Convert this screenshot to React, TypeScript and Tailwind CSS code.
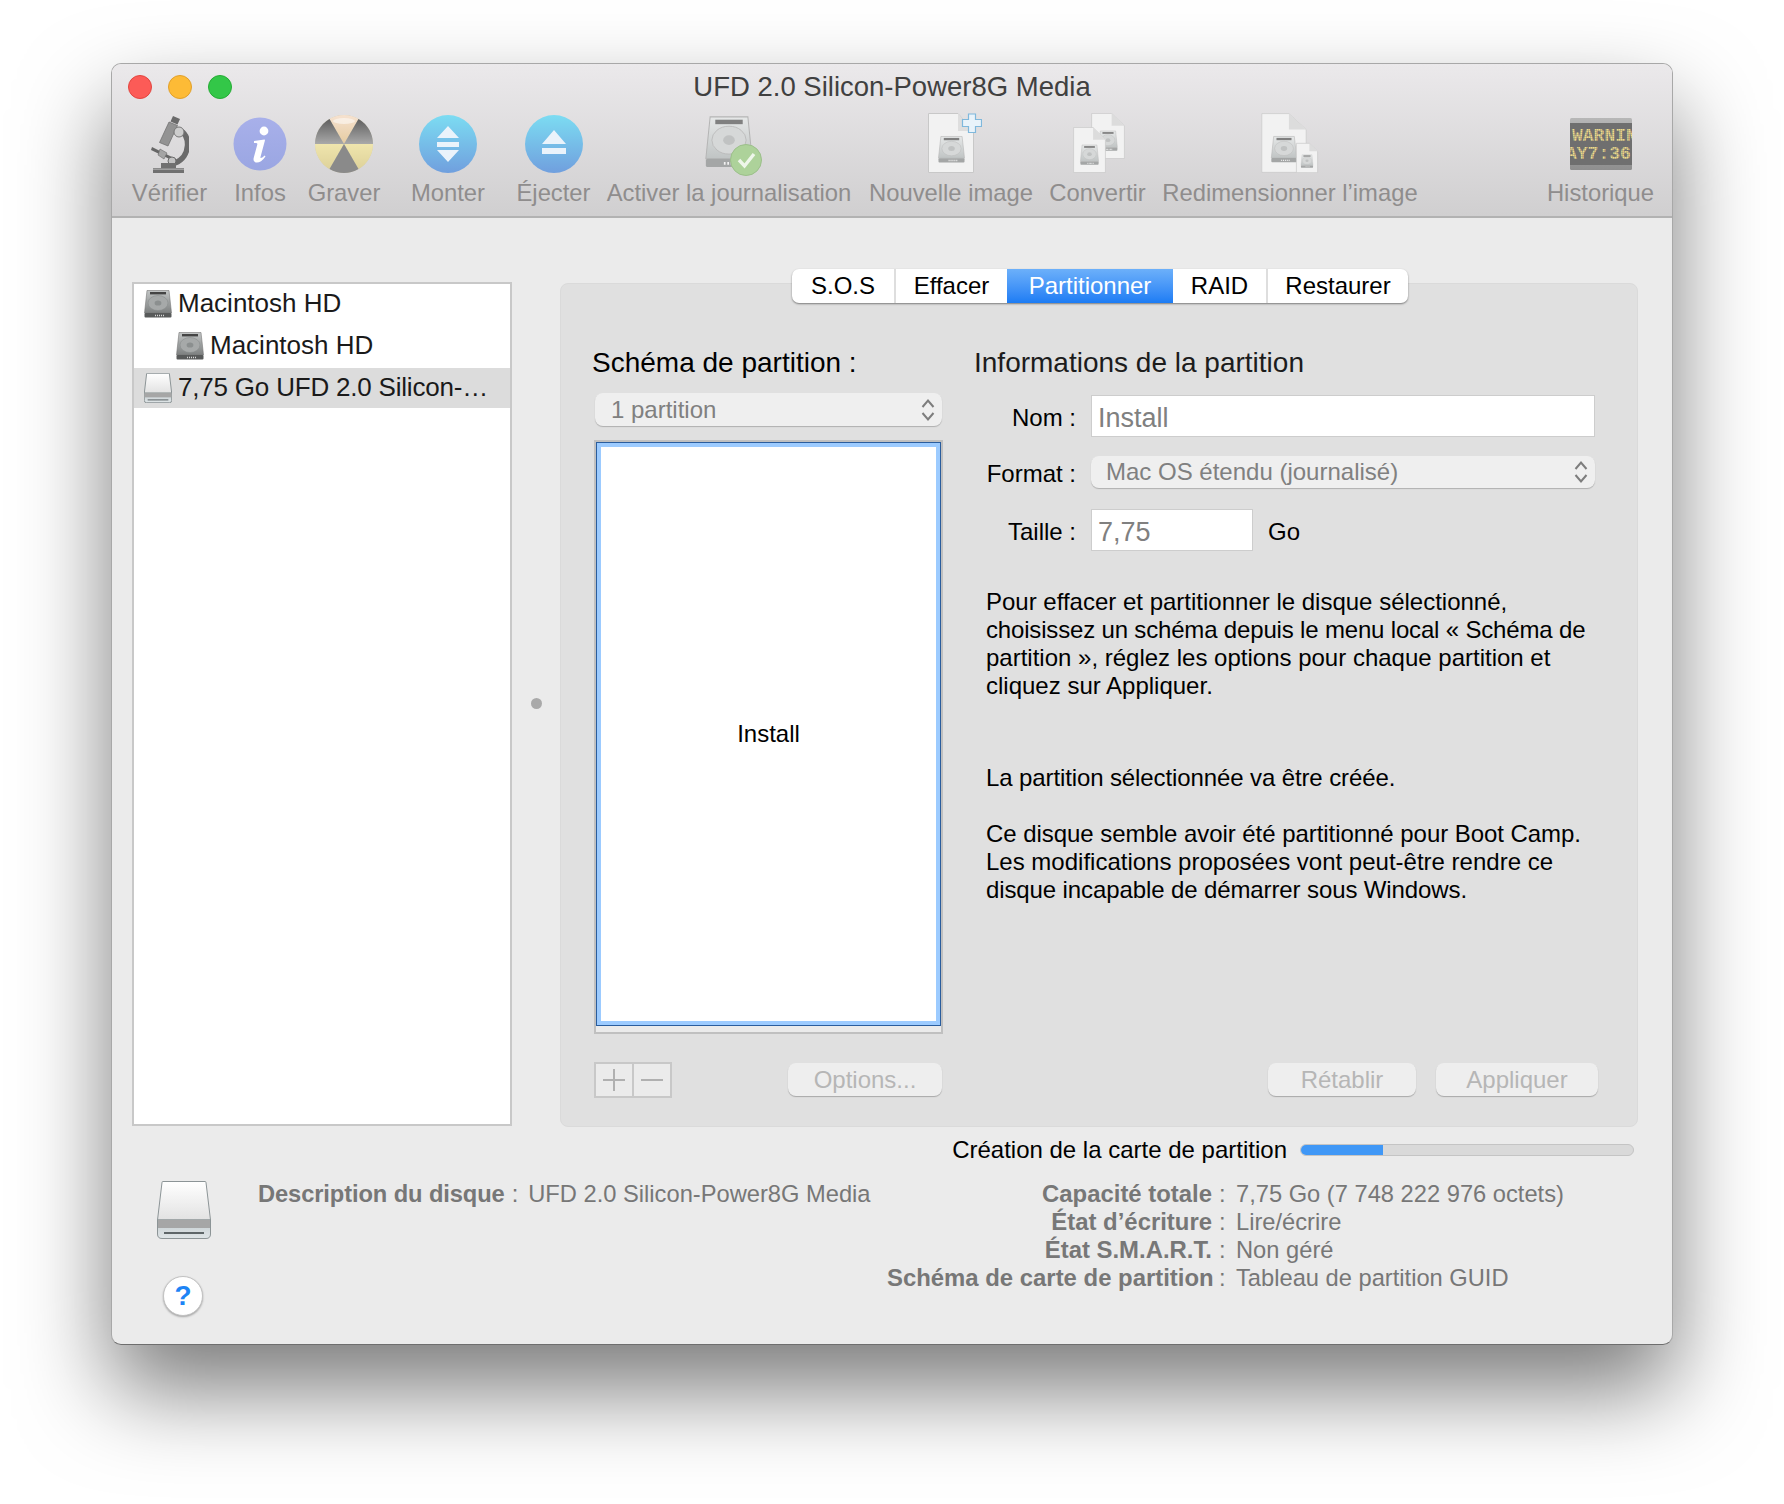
const HardDisk = ({ dark = false, x = 0, y = 0, w = 28, h = 28 }: { dark?: boolean; x?: number; y?: number; w?: number; h?: number }) => {
  const id = dark ? "hdDark" : "hdLight";
  return (
    <svg x={x} y={y} width={w} height={h} viewBox="0 0 28 28" preserveAspectRatio="none" overflow="visible">
      <defs>
        <linearGradient id={id} x1="0" y1="0" x2="0" y2="1">
          <stop offset="0" stopColor={dark ? "#c2c5c5" : "#e6e8e8"} />
          <stop offset="1" stopColor={dark ? "#7d8080" : "#c0c4c4"} />
        </linearGradient>
      </defs>
      <path d="M3 0.5H25L27.5 23H0.5Z" fill={`url(#${id})`} stroke={dark ? "#777" : "#b5b5b5"} strokeWidth="0.6" />
      <rect x="6" y="2" width="16" height="2.4" fill={dark ? "#444" : "#808080"} />
      <ellipse cx="14" cy="13" rx="10" ry="7.5" fill={dark ? "#a6a9a9" : "#d6d8d8"} stroke={dark ? "#858888" : "#bbb"} strokeWidth="0.5" />
      <ellipse cx="14" cy="13" rx="3.4" ry="2.6" fill={dark ? "#8b8f8f" : "#c0c2c2"} />
      <rect x="0.5" y="23" width="27" height="4.5" rx="1" fill={dark ? "#585a5a" : "#a4a6a6"} />
      <path d="M11 25.5H21" stroke={dark ? "#d8d8d8" : "#f2f2f2"} strokeWidth="1.5" strokeDasharray="1 1" />
    </svg>
  );
};

const ExternalDisk = ({ className }: { className: string }) => (
  <svg className={className} viewBox="0 0 54 58">
    <defs>
      <linearGradient id="extTop" x1="0" y1="0" x2="0" y2="1">
        <stop offset="0" stopColor="#ffffff" />
        <stop offset="1" stopColor="#e2e2e2" />
      </linearGradient>
      <linearGradient id="extFoot" x1="0" y1="0" x2="0" y2="1">
        <stop offset="0" stopColor="#c4cccf" />
        <stop offset="1" stopColor="#dfe5e7" />
      </linearGradient>
    </defs>
    <path d="M5 1.5Q5 0.5 6 0.5H48Q49 0.5 49 1.5L53.5 39H0.5Z" fill="url(#extTop)" stroke="#8c9496" strokeWidth="1" vectorEffect="non-scaling-stroke" />
    <path d="M0.5 39H53.5V53Q53.5 57.5 49 57.5H5Q0.5 57.5 0.5 53Z" fill="url(#extFoot)" stroke="#8c9496" strokeWidth="1" vectorEffect="non-scaling-stroke" />
    <rect x="1" y="39" width="52" height="8" fill="#a6a6a6" />
    <rect x="7" y="51" width="40" height="2" fill="#5e6668" />
  </svg>
);

const MicroscopeIcon = () => (
  <svg width="38" height="58" viewBox="0 0 38 58">
    <path d="M22 1L29 4L26.5 9.5L19.5 6.5Z" fill="#6a6a6a" />
    <path d="M18 7L26.5 10.5L17 31L8.5 27.5Z" fill="#939393" stroke="#6a6a6a" strokeWidth="0.7" />
    <path d="M28 15C40 19 40 42 24 48" fill="none" stroke="#6a6a6a" strokeWidth="5.5" />
    <circle cx="28" cy="17" r="5" fill="#cdcdcd" stroke="#777" />
    <path d="M1 32L21 42L19.5 44.5L0 35Z" fill="#666" />
    <path d="M9 34L16 38L13 44L7 40Z" fill="#a4a4a4" stroke="#6a6a6a" strokeWidth="0.6" />
    <circle cx="21" cy="46" r="4" fill="#c2c2c2" stroke="#6a6a6a" />
    <path d="M10 48H25V53H33V58H2V53H10Z" fill="#707070" />
    <rect x="2" y="53.5" width="31" height="1.4" fill="#a5a5a5" />
  </svg>
);

const InfoIcon = () => (
  <svg width="54" height="54" viewBox="0 0 54 54">
    <defs>
      <linearGradient id="infoFill" x1="0" y1="0" x2="0" y2="1">
        <stop offset="0" stopColor="#a8b0ea" />
        <stop offset="1" stopColor="#9aa6e2" />
      </linearGradient>
    </defs>
    <circle cx="27" cy="27" r="26.5" fill="url(#infoFill)" />
    <circle cx="31" cy="14" r="4.4" fill="#fff" />
    <path d="M21 24L31.5 22.5C32 22.5 32 23 31.8 24L27.5 40C27.2 41.5 28.5 41.5 31.5 38.5L32.5 39.5C29 44.5 25.5 46 22.8 45.4C20.4 44.8 20.2 42.6 20.8 40.5L24.3 27.5C24.6 26 23.5 25.8 21 26Z" fill="#fff" />
  </svg>
);

const BurnIcon = () => (
  <svg width="58" height="58" viewBox="0 0 58 58">
    <defs>
      <linearGradient id="burnTop" x1="0" y1="0" x2="0" y2="1">
        <stop offset="0" stopColor="#f6e2d0" />
        <stop offset="1" stopColor="#e5cba0" />
      </linearGradient>
      <linearGradient id="burnGrey" x1="0" y1="0" x2="0" y2="1">
        <stop offset="0" stopColor="#5f5f5f" />
        <stop offset="1" stopColor="#a9a9a9" />
      </linearGradient>
      <linearGradient id="burnBottom" x1="0" y1="0" x2="0" y2="1">
        <stop offset="0" stopColor="#efe5ad" />
        <stop offset="1" stopColor="#ded29a" />
      </linearGradient>
    </defs>
    <circle cx="29" cy="29" r="29" fill="#cfcab0" />
    <path d="M29 29L14.5 3.9A29 29 0 0 1 43.5 3.9Z" fill="url(#burnTop)" />
    <path d="M29 29L43.5 3.9A29 29 0 0 1 58 29Z" fill="url(#burnGrey)" />
    <path d="M29 29L14.5 3.9A29 29 0 0 0 0 29Z" fill="url(#burnGrey)" />
    <path d="M29 29H58A29 29 0 0 1 43.5 54.1Z" fill="url(#burnBottom)" />
    <path d="M29 29H0A29 29 0 0 0 14.5 54.1Z" fill="url(#burnBottom)" />
    <path d="M29 29L14.5 54.1A29 29 0 0 0 43.5 54.1Z" fill="#8a8a8a" />
    <ellipse cx="29" cy="6" rx="11" ry="3" fill="#fff" opacity="0.5" />
  </svg>
);

const BlueDisc = ({ children }: { children: React.ReactNode }) => (
  <svg width="58" height="58" viewBox="0 0 58 58">
    <defs>
      <linearGradient id="blueFill" x1="0" y1="0" x2="0" y2="1">
        <stop offset="0" stopColor="#7cdcf2" />
        <stop offset="1" stopColor="#709fde" />
      </linearGradient>
    </defs>
    <circle cx="29" cy="29" r="29" fill="url(#blueFill)" />
    {children}
  </svg>
);

const CheckDiskIcon = () => (
  <svg className="ml-[10px] mt-[4px]" width="58" height="62" viewBox="0 0 58 62">
    <HardDisk x={0} y={1} w={48} h={52} />
    <circle cx="41" cy="45" r="15.5" fill="#add29a" stroke="#9cbf8b" />
    <path d="M34 45L39.5 51L49 39" fill="none" stroke="#eef6ea" strokeWidth="3.4" />
  </svg>
);

const Doc = ({ x, y, w, h }: { x: number; y: number; w: number; h: number }) => (
  <svg x={x} y={y} width={w} height={h} viewBox="0 0 28 47" preserveAspectRatio="none" overflow="visible">
    <path d="M0.5 0.5H17L27.5 13V46.5H0.5Z" fill="#f2f2f2" stroke="#c8c8c8" strokeWidth="0.7" vectorEffect="non-scaling-stroke" />
    <path d="M17 0.5V13H27.5Z" fill="#dcdcdc" />
    <HardDisk x={6} y={18} w={16} h={21} />
  </svg>
);

const NewImageIcon = () => (
  <svg className="-mt-[2px] ml-[8px]" width="54" height="60" viewBox="0 0 54 60">
    <path d="M0.5 0.5H30L45.5 18V59.5H0.5Z" fill="#f2f2f2" stroke="#c8c8c8" />
    <path d="M30 0.5V18H45.5Z" fill="#dedede" />
    <HardDisk x={10} y={23} w={27} h={27} />
    <path d="M40.5 1H47.5V6.5H53.5V13.5H47.5V19.5H40.5V13.5H34.5V6.5H40.5Z" fill="#e9f3fa" stroke="#7fb8dc" strokeWidth="1.2" />
  </svg>
);

const ConvertIcon = () => (
  <svg className="-mt-[2px]" width="54" height="60" viewBox="0 0 54 60">
    <Doc x={20} y={0} w={34} h={46} />
    <Doc x={2} y={14} w={33} h={46} />
  </svg>
);

const ResizeIcon = () => (
  <svg className="-mt-[2px]" width="58" height="60" viewBox="0 0 58 60">
    <Doc x={0} y={0} w={46} h={60} />
    <Doc x={35} y={30} w={22} h={30} />
  </svg>
);

const LogIcon = () => (
  <svg width="62" height="52" viewBox="0 0 62 52">
    <defs>
      <linearGradient id="logEdge" x1="0" y1="0" x2="0" y2="1">
        <stop offset="0" stopColor="#b7b7b7" />
        <stop offset="1" stopColor="#8e8e8e" />
      </linearGradient>
      <clipPath id="logClip">
        <rect x="0" y="5" width="62" height="42" />
      </clipPath>
      <pattern id="logDots" width="2" height="2" patternUnits="userSpaceOnUse">
        <path d="M0 0.5H2M0.5 0V2" stroke="#6f6f6f" strokeWidth="0.3" />
      </pattern>
    </defs>
    <rect width="62" height="52" rx="1.5" fill="url(#logEdge)" />
    <rect y="5" width="62" height="42" fill="#6f6f6f" />
    <g clipPath="url(#logClip)" fill="#ecd98a" fontFamily="'Liberation Mono', monospace" fontWeight="700" fontSize="18">
      <text x="2" y="23">WARNIN</text>
      <text x="-4" y="41">AY7:36</text>
    </g>
    <rect y="5" width="62" height="42" fill="url(#logDots)" />
  </svg>
);

const tools = [
  { label: "Vérifier", box: "w-[75px] ml-[20px]", icon: <MicroscopeIcon /> },
  { label: "Infos", box: "w-[52px] ml-[27px]", icon: <InfoIcon /> },
  { label: "Graver", box: "w-[72px] ml-[22px]", icon: <BurnIcon /> },
  { label: "Monter", box: "w-[74px] ml-[31px]", icon: <BlueDisc><path d="M29 11L40 23H18Z M18 27H40V32H18Z M18 35L29 47L40 35Z" fill="#eaf3fb" /></BlueDisc> },
  { label: "Éjecter", box: "w-[73px] ml-[32px]", icon: <BlueDisc><path d="M29 15L41 29H17Z M17 33H41V39H17Z" fill="#eaf3fb" /></BlueDisc> },
  { label: "Activer la journalisation", box: "w-[246px] ml-[16px]", icon: <CheckDiskIcon /> },
  { label: "Nouvelle image", box: "w-[162px] ml-[18px]", icon: <NewImageIcon /> },
  { label: "Convertir", box: "w-[97px] ml-[17px]", icon: <ConvertIcon /> },
  { label: "Redimensionner l’image", box: "w-[254px] ml-[17px]", icon: <ResizeIcon /> },
  { label: "Historique", box: "w-[109px] ml-[129px]", icon: <LogIcon /> },
];

const SelectBox = ({ text, className }: { text: string; className: string }) => (
  <div className={`flex shrink-0 items-center justify-between rounded-[8px] bg-[#efefef] text-[24px] text-[#808080] shadow-[0_1px_1px_rgba(0,0,0,0.22)] ${className}`}>
    <span>{text}</span>
    <svg width="14" height="24" viewBox="0 0 14 24" fill="none" stroke="#7d7d7d" strokeWidth="2">
      <path d="M1.5 9L7 2.5L12.5 9" />
      <path d="M1.5 15L7 21.5L12.5 15" />
    </svg>
  </div>
);

const PushButton = ({ text, className }: { text: string; className: string }) => (
  <div className={`flex h-[33px] items-center justify-center rounded-[8px] bg-[#eeeeee] text-[24px] text-[#b6b6b6] shadow-[0_1px_1px_rgba(0,0,0,0.25)] ${className}`}>
    {text}
  </div>
);

const Row = ({ children, className }: { children: React.ReactNode; className: string }) => (
  <div className={`flex h-[40px] items-center ${className}`}>{children}</div>
);

const diskInfo = [
  ["Capacité totale", "7,75 Go (7 748 222 976 octets)"],
  ["État d’écriture", "Lire/écrire"],
  ["État S.M.A.R.T.", "Non géré"],
  ["Schéma de carte de partition", "Tableau de partition GUID"],
];

const tabs = [
  { label: "S.O.S", box: "w-[102px]" },
  { label: "Effacer", box: "w-[113px] border-l-2 border-[#dedede]" },
  { label: "Partitionner", box: "w-[166px] bg-gradient-to-b from-[#6cb0fa] to-[#1b7cf4] text-white" },
  { label: "RAID", box: "w-[93px]" },
  { label: "Restaurer", box: "w-[142px] border-l-2 border-[#dedede]" },
];

export default function App() {
  return (
    <div className="min-h-[1504px] bg-white pl-[111px] pt-[63px] font-['Liberation_Sans',sans-serif] text-black">
      <div className="flex h-[1282px] w-[1562px] flex-col overflow-hidden rounded-[10px] border border-[#a8a8a8] border-b-[#6e6e6e] bg-[#ebebeb] shadow-[0_45px_90px_rgba(0,0,0,0.52)]">
        {/* title bar and toolbar */}
        <div className="h-[154px] border-b-2 border-[#b2b2b2] bg-gradient-to-b from-[#ebe9eb] to-[#d0cfd0]">
          <div className="grid h-[47px] grid-cols-[1fr_auto_1fr] items-center">
            <div className="-mt-[2px] flex gap-[16px] pl-[16px]">
              <div className="h-[24px] w-[24px] rounded-full border border-[#e2453f] bg-[#fc5b57]" />
              <div className="h-[24px] w-[24px] rounded-full border border-[#e1a02b] bg-[#fdbb36]" />
              <div className="h-[24px] w-[24px] rounded-full border border-[#25ac35] bg-[#33c748]" />
            </div>
            <div className="-mt-[1px] text-[27.5px] text-[#404040]">UFD 2.0 Silicon-Power8G Media</div>
            <div />
          </div>
          <div className="flex">
            {tools.map((tool) => (
              <div key={tool.label} className={`flex flex-col items-center ${tool.box}`}>
                <div className="flex h-[66px] items-center justify-center">{tool.icon}</div>
                <div className="whitespace-nowrap text-[23.8px] leading-[32px] text-[#8f8d8d]">{tool.label}</div>
              </div>
            ))}
          </div>
        </div>

        <div className="flex pl-[20px] pt-[64px]">
          {/* disk list */}
          <div className="h-[844px] w-[380px] border-2 border-[#c8c8c8] bg-white text-[26px] text-[#1a1a1a]">
            <div className="flex flex-col gap-[2px]">
              <Row className="gap-[6px] pl-[10px]">
                <svg width="28" height="28"><HardDisk dark /></svg>
                <span className="-mt-[2px]">Macintosh HD</span>
              </Row>
              <Row className="gap-[6px] pl-[42px]">
                <svg width="28" height="28"><HardDisk dark /></svg>
                <span className="-mt-[2px]">Macintosh HD</span>
              </Row>
              <Row className="gap-[6px] bg-[#dcdcdc] pl-[10px]">
                <ExternalDisk className="h-[30px] w-[28px]" />
                <span className="-mt-[2px] tracking-[-0.2px]">7,75 Go UFD 2.0 Silicon-…</span>
              </Row>
            </div>
          </div>

          {/* splitter */}
          <div className="flex w-[48px] items-center justify-center">
            <div className="-mt-[3px] h-[11px] w-[11px] rounded-full bg-[#a9a9a9]" />
          </div>

          {/* partition panel */}
          <div className="relative mt-[1px] flex h-[844px] w-[1078px] rounded-[8px] border border-[#dadada] bg-[#e0e0e0] pb-[28px] pl-[31px] pt-[60px]">
            <div className="absolute -top-[15px] left-[231px] flex h-[34px] overflow-hidden rounded-[7px] bg-white text-[24px] shadow-[0_1px_2px_rgba(0,0,0,0.45)]">
              {tabs.map((tab) => (
                <div key={tab.label} className={`flex items-center justify-center ${tab.box}`}>{tab.label}</div>
              ))}
            </div>

            <div className="flex w-[382px] flex-col">
              <div className="mt-[1px] text-[28px] leading-[36px]">Schéma de partition :</div>
              <SelectBox text="1 partition" className="ml-[3px] mt-[12px] h-[33px] w-[347px] pl-[16px] pr-[7px]" />
              <div className="ml-[2px] mt-[14px] h-[594px] w-[349px] shrink-0 border-2 border-[#c0c0c0] bg-[#ebebeb]">
                <div className="h-[584px] border border-[#2a5d9d]">
                  <div className="flex h-full items-center justify-center border-4 border-[#9ccbff] bg-white text-[24px]">
                    Install
                  </div>
                </div>
              </div>
              <div className="mt-[28px] flex items-start justify-between pr-[32px]">
                <div className="ml-[2px] flex h-[36px] w-[78px] border-2 border-[#c8c8c8] bg-[#ebebeb]">
                  <div className="flex w-[38px] items-center justify-center border-r-2 border-[#c8c8c8]">
                    <svg width="24" height="24" viewBox="0 0 24 24" stroke="#b0b0b0" strokeWidth="2"><path d="M12 1V23M1 12H23" /></svg>
                  </div>
                  <div className="flex flex-1 items-center justify-center">
                    <svg width="24" height="24" viewBox="0 0 24 24" stroke="#b0b0b0" strokeWidth="2"><path d="M1 12H23" /></svg>
                  </div>
                </div>
                <PushButton text="Options..." className="mt-[1px] w-[154px]" />
              </div>
            </div>

            <div className="flex w-[624px] flex-col">
              <div className="mt-[1px] text-[28px] leading-[36px] text-[#1c1c1c]">Informations de la partition</div>
              <div className="mt-[14px] flex h-[42px] items-center gap-[15px] text-[24px]">
                <div className="w-[102px] pt-[4px] text-right">Nom :</div>
                <div className="flex h-[42px] w-[504px] items-center border border-[#cdcdcd] bg-white pl-[6px] pt-[4px] text-[27px] text-[#808080]">Install</div>
              </div>
              <div className="mt-[19px] flex h-[32px] items-center gap-[15px] text-[24px]">
                <div className="w-[102px] pt-[4px] text-right">Format :</div>
                <SelectBox text="Mac OS étendu (journalisé)" className="h-[32px] w-[504px] pl-[15px] pr-[7px]" />
              </div>
              <div className="mt-[21px] flex h-[42px] items-center gap-[15px] text-[24px]">
                <div className="w-[102px] pt-[4px] text-right">Taille :</div>
                <div className="flex h-[42px] w-[162px] items-center border border-[#cdcdcd] bg-white pl-[6px] pt-[4px] text-[27px] text-[#808080]">7,75</div>
                <div className="pt-[4px]">Go</div>
              </div>
              <div className="ml-[12px] mt-[37px] text-[24px] leading-[28px]">
                <p>
                  Pour effacer et partitionner le disque sélectionné,<br />
                  <span className="tracking-[-0.17px]">choisissez un schéma depuis le menu local « Schéma de</span><br />
                  partition », réglez les options pour chaque partition et<br />
                  cliquez sur Appliquer.
                </p>
                <p className="mt-[64px] tracking-[-0.11px]">La partition sélectionnée va être créée.</p>
                <p className="mt-[28px]">
                  <span className="tracking-[-0.05px]">Ce disque semble avoir été partitionné pour Boot Camp.</span><br />
                  Les modifications proposées vont peut-être rendre ce<br />
                  <span className="tracking-[-0.11px]">disque incapable de démarrer sous Windows.</span>
                </p>
              </div>
              <div className="mb-[2px] mt-auto flex justify-end gap-[20px]">
                <PushButton text="Rétablir" className="w-[148px]" />
                <PushButton text="Appliquer" className="w-[162px]" />
              </div>
            </div>
          </div>
        </div>

        {/* progress */}
        <div className="mt-[9px] flex h-[28px] items-center justify-end gap-[13px] pr-[38px] text-[24px]">
          <span>Création de la carte de partition</span>
          <div className="h-[12px] w-[334px] overflow-hidden rounded-full border border-[#c4c4c4] bg-[#d9d9d9]">
            <div className="h-full w-[82px] bg-[#3f97f6]" />
          </div>
        </div>

        {/* disk description */}
        <div className="mt-[16px] flex text-[23.7px] leading-[28px] text-[#777777]">
          <div className="ml-[45px] flex w-[54px] flex-col items-center pt-[1px]">
            <ExternalDisk className="h-[58px] w-[54px]" />
            <div className="-ml-[2px] mt-[37px] flex h-[40px] w-[40px] items-center justify-center rounded-full border border-[#c2c2c2] bg-white text-[28px] font-bold text-[#1d84f5] shadow-[0_1px_2px_rgba(0,0,0,0.3)]">?</div>
          </div>
          <div className="ml-[47px] flex w-[629px]">
            <span className="font-bold tracking-[-0.1px]">Description du disque</span>
            <span className="ml-[7px]">:</span>
            <span className="ml-[10px]">UFD 2.0 Silicon-Power8G Media</span>
          </div>
          <div className="grid grid-cols-[325px_24px_auto] content-start">
            {diskInfo.map(([name, value]) => (
              <div key={name} className="contents">
                <span className="whitespace-nowrap text-right text-[23.9px] font-bold">{name}</span>
                <span className="pl-[7px]">:</span>
                <span className="whitespace-nowrap">{value}</span>
              </div>
            ))}
          </div>
        </div>
      </div>
    </div>
  );
}
